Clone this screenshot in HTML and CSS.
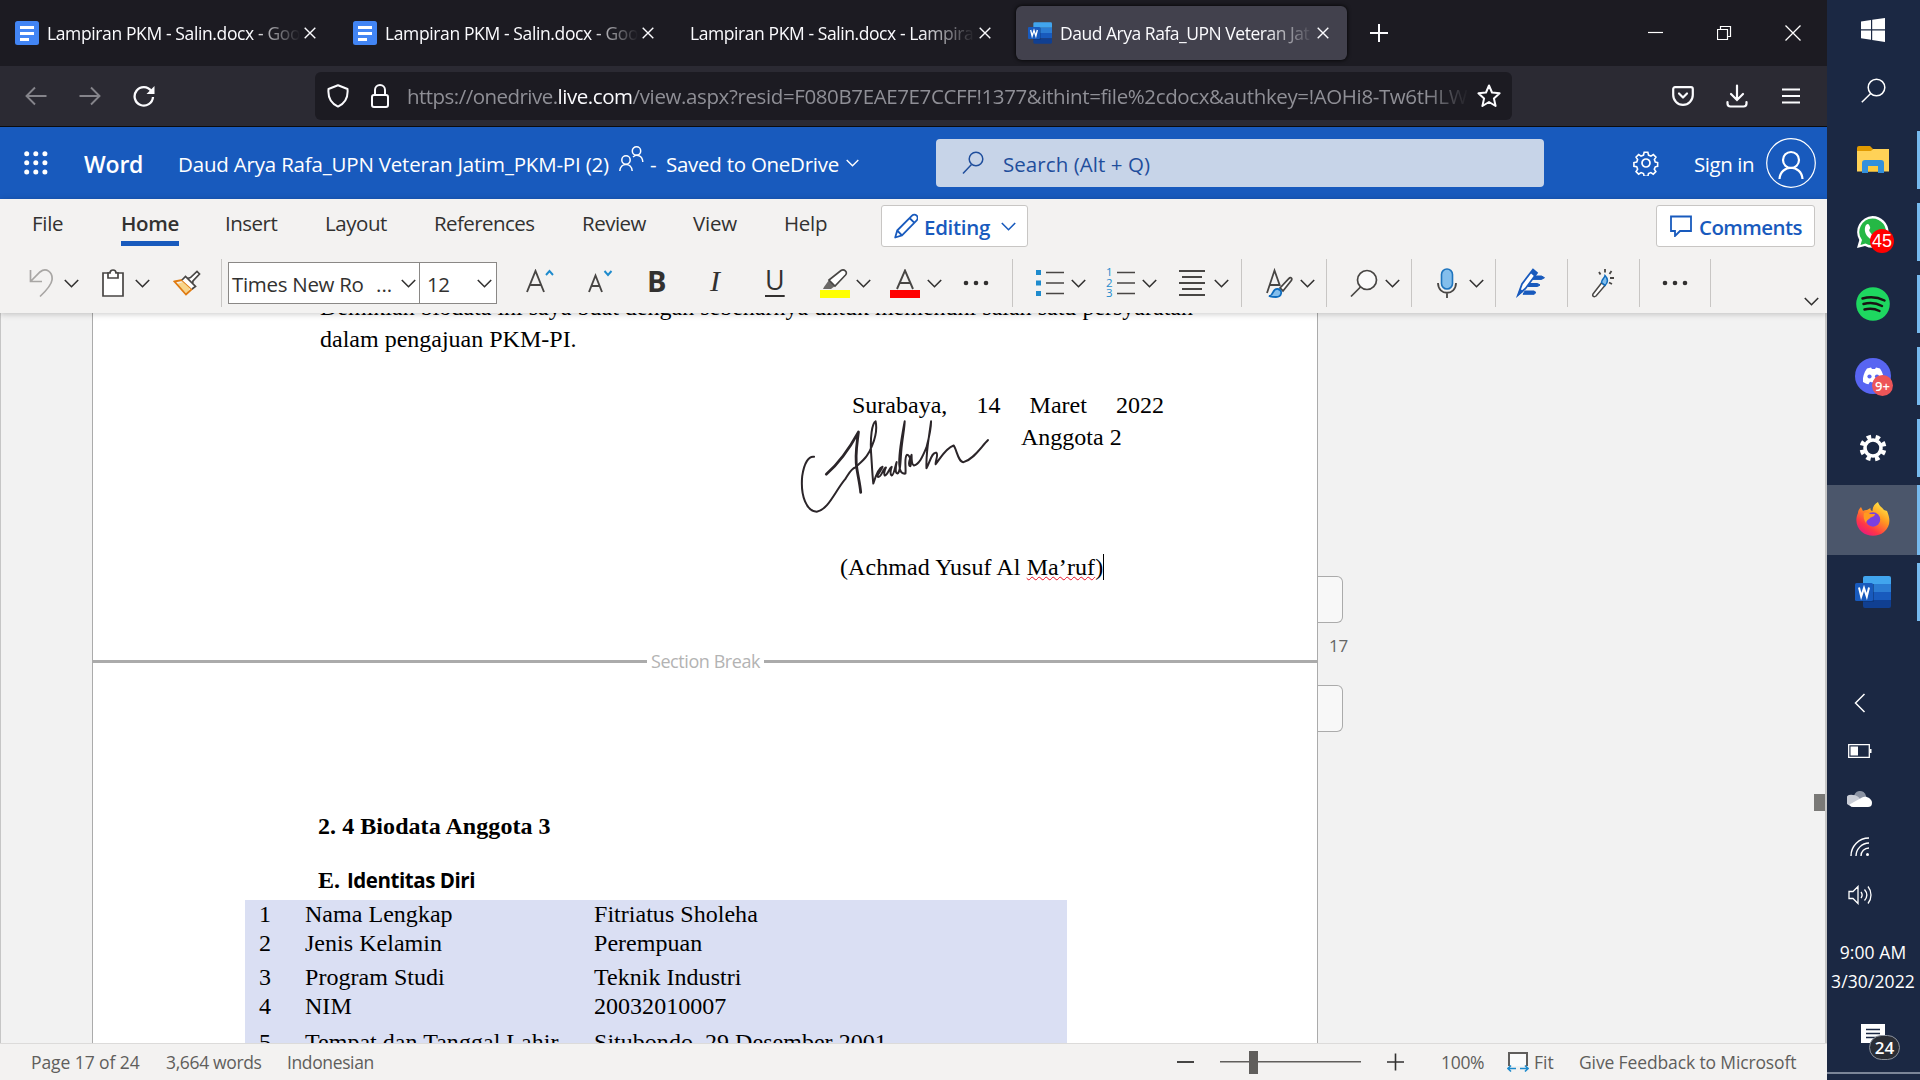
FILE: index.html
```html
<!DOCTYPE html>
<html lang="en">
<head>
<meta charset="utf-8">
<title>Daud Arya Rafa_UPN Veteran Jatim_PKM-PI (2)</title>
<link rel="stylesheet" href="styles.css">
</head>
<body>
<svg width="0" height="0" class="defs">
  <defs>
    <symbol id="chev" viewBox="0 0 15 9"><path d="M.8 1l6.700 6.700L14.200 1" fill="none" stroke="currentColor" stroke-width="1.600"/></symbol>
    <symbol id="x" viewBox="0 0 12 12"><path d="M.7.700l10.600 10.600M11.300.7.700 11.300" stroke="currentColor" stroke-width="1.400"/></symbol>
    <symbol id="gdoc" viewBox="0 0 24 24"><rect width="24" height="24" rx="2.500" fill="#4285f4"/><path d="M5 5h14v3H5zM5 11h14v3H5zM5 17h9v3H5z" fill="#fff"/></symbol>
    <symbol id="word" viewBox="0 0 36 32"><path d="M10 0h24a2 2 0 0 1 2 2v6H8V2a2 2 0 0 1 2-2z" fill="#41a5ee"/><path d="M8 8h28v8H8z" fill="#2b7cd3"/><path d="M8 16h28v8H8z" fill="#185abd"/><path d="M8 24h28v6a2 2 0 0 1-2 2H10a2 2 0 0 1-2-2z" fill="#103f91"/><path d="M8 8h11v18H8z" fill="#0b2f6b" opacity=".5"/><rect y="7" width="18" height="18" rx="1.500" fill="#185abd"/><path d="M4 11.500l2.200 9L9 12l2.800 8.500 2.200-9" fill="none" stroke="#fff" stroke-width="2"/></symbol>
  </defs>
</svg>
<div class="screen">
<main class="browser">
  <div class="tabs">
    <div class="tab tab-1"><svg class="fav" width="24" height="24"><use href="#gdoc"/></svg><span class="title">Lampiran PKM - Salin.docx - Goo</span><svg class="close" width="12" height="12"><use href="#x"/></svg></div>
    <div class="tab tab-2"><svg class="fav" width="24" height="24"><use href="#gdoc"/></svg><span class="title">Lampiran PKM - Salin.docx - Goo</span><svg class="close" width="12" height="12"><use href="#x"/></svg></div>
    <div class="tab tab-3"><span class="title">Lampiran PKM - Salin.docx - Lampira</span><svg class="close" width="12" height="12"><use href="#x"/></svg></div>
    <div class="tab tab-4"><svg class="fav" width="24" height="22" preserveAspectRatio="none"><use href="#word"/></svg><span class="title">Daud Arya Rafa_UPN Veteran Jat</span><svg class="close" width="12" height="12"><use href="#x"/></svg></div>
    <svg class="new-tab" width="18" height="18" viewBox="0 0 18 18"><path d="M9 0v18M0 9h18" stroke="#fbfbfe" stroke-width="2"/></svg>
    <div class="win-buttons">
      <svg width="16" height="16"><path d="M0 7.500h15" stroke="#fff" stroke-width="1.200"/></svg>
      <svg width="16" height="16" fill="none" stroke="#fff" stroke-width="1.200"><path d="M.5 4.500h10v10H.5zM3.500 4.500v-3h10v10h-3"/></svg>
      <svg width="16" height="16"><path d="M.5.500l15 15M15.500.500l-15 15" stroke="#fff" stroke-width="1.300"/></svg>
    </div>
  </div>

  <div class="nav">
    <svg class="back" width="22" height="20" fill="none" stroke="#85848b" stroke-width="1.900"><path d="M21.500 10H1.500M10 1.500L1.500 10l8.500 8.500"/></svg>
    <svg class="forward" width="22" height="20" fill="none" stroke="#85848b" stroke-width="1.900"><path d="M.5 10h20M12 1.500l8.500 8.500-8.500 8.500"/></svg>
    <svg class="reload" width="22" height="22" fill="none" stroke="#fbfbfe" stroke-width="2.300"><path d="M18.300 6A9.200 9.200 0 1 0 20 12"/><path d="M21.500 1v8h-8z" fill="#fbfbfe" stroke="none"/></svg>
    <div class="url">
      <svg class="shield" width="22" height="24" fill="none" stroke="#fbfbfe" stroke-width="2"><path d="M11 1.200L20.500 5c.8 8.500-3 14.500-9.500 17.600C4.500 19.500.7 13.500 1.500 5z" stroke-linejoin="round"/></svg>
      <svg class="lock" width="18" height="24" fill="none" stroke="#fbfbfe" stroke-width="2"><rect x="1" y="11" width="16" height="12" rx="2"/><path d="M4 11V6a5 5 0 0 1 10 0v5"/></svg>
      <span class="address"><span class="proto">https://onedrive.</span><span class="domain">live.com</span><span class="path">/view.aspx?resid=F080B7EAE7E7CCFF!1377&amp;ithint=file%2cdocx&amp;authkey=!AOHi8-Tw6tHLW</span></span>
      <svg class="star" width="24" height="24" fill="none" stroke="#fbfbfe" stroke-width="2" stroke-linejoin="round"><path d="M12 1.500l3 7 7.600.8-5.700 5.100 1.700 7.600L12 18l-6.600 4 1.700-7.600L1.400 9.300 9 8.500z"/></svg>
    </div>
    <svg class="pocket" width="22" height="20" fill="none" stroke="#fbfbfe" stroke-width="2.200" stroke-linejoin="round" stroke-linecap="round"><path d="M3 1.200h16a1.800 1.800 0 0 1 1.800 1.800v6a9.800 9.800 0 0 1-19.600 0V3A1.800 1.800 0 0 1 3 1.200zM7 7.500l4 4 4-4"/></svg>
    <svg class="download" width="22" height="24" fill="none" stroke="#fbfbfe" stroke-width="2.200" stroke-linecap="round"><path d="M11 1.500v14M5 10l6 6 6-6M1.500 18v1.500a3 3 0 0 0 3 3h13a3 3 0 0 0 3-3V18"/></svg>
    <svg class="menu" width="18" height="16"><path d="M0 1.500h18M0 8h18M0 14.500h18" stroke="#fbfbfe" stroke-width="2"/></svg>
  </div>

  <header class="app-bar">
    <svg class="waffle" width="24" height="24" fill="#fff"><circle cx="2.700" cy="2.700" r="2.500"/><circle cx="11.800" cy="2.700" r="2.500"/><circle cx="20.900" cy="2.700" r="2.500"/><circle cx="2.700" cy="11.800" r="2.500"/><circle cx="11.800" cy="11.800" r="2.500"/><circle cx="20.900" cy="11.800" r="2.500"/><circle cx="2.700" cy="20.900" r="2.500"/><circle cx="11.800" cy="20.900" r="2.500"/><circle cx="20.900" cy="20.900" r="2.500"/></svg>
    <span class="brand">Word</span>
    <span class="doc-name">Daud Arya Rafa_UPN Veteran Jatim_PKM-PI (2)</span>
    <svg class="people" width="26" height="26" fill="none" stroke="#fff" stroke-width="1.500"><circle cx="7" cy="14" r="4.200"/><path d="M.8 25c.5-8.800 11.900-8.800 12.400 0"/><circle cx="17.500" cy="5" r="4.200"/><path d="M14 11c4-3.500 9.500-1 9.800 5"/></svg>
    <span class="dash">-</span>
    <span class="saved">Saved to OneDrive</span>
    <svg class="saved-chev" width="13" height="8"><use href="#chev"/></svg>
    <div class="search">
      <svg width="22" height="24" fill="none" stroke="#1f4e9c" stroke-width="1.500"><circle cx="14" cy="8" r="6.800"/><path d="M9.500 13.500L1 22.500"/></svg>
      <span>Search (Alt + Q)</span>
    </div>
    <svg class="gear" width="26" height="26" viewBox="-13 -13 26 26" fill="none" stroke="#fff" stroke-width="1.700"><path d="M-2-11.500h4l.7 3 2.600 1.100 2.600-1.700 2.800 2.800-1.700 2.600 1 2.600 2.500.6v4l-2.500.6-1.100 2.500 1.700 2.600-2.800 2.800-2.600-1.700-2.500 1-.7 3h-4l-.7-3-2.600-1-2.600 1.700-2.800-2.800 1.700-2.600-1-2.500-3-.6v-4l3-.6 1-2.600-1.700-2.600 2.800-2.800 2.600 1.700 2.600-1.100z" transform="scale(.93)"/><circle r="4"/></svg>
    <span class="sign-in">Sign in</span>
    <svg class="avatar" width="50" height="50" fill="none" stroke="#fff"><circle cx="25" cy="25" r="24.300" stroke-width="1.200"/><g stroke-width="2.200"><circle cx="25" cy="22" r="8"/><path d="M13.500 41c1-15 22-15 23 0"/></g></svg>
  </header>

  <div class="ribbon">
    <nav class="ribbon-tabs">
      <span class="r-file">File</span>
      <span class="r-home">Home</span>
      <span class="r-insert">Insert</span>
      <span class="r-layout">Layout</span>
      <span class="r-references">References</span>
      <span class="r-review">Review</span>
      <span class="r-view">View</span>
      <span class="r-help">Help</span>
      <div class="pill editing"><svg width="24" height="26" fill="none" stroke="#185abd" stroke-width="1.800" stroke-linejoin="round"><path d="M1.200 24.500l2-7L18 2.600a3.300 3.300 0 0 1 4.700 4.700L8 22.300zM15.500 5l4.700 4.700M3.200 17.500L8 22.300"/></svg><span>Editing</span><svg class="chev" width="15" height="9"><use href="#chev"/></svg></div>
      <div class="pill comments"><svg width="22" height="22" fill="none" stroke="#185abd" stroke-width="1.800"><path d="M1 1.500h20V16H10l-5 5v-5H1z"/></svg><span>Comments</span></div>
    </nav>
    <div class="tools">
      <svg class="undo" width="26" height="29" fill="none" stroke="#a8a6a4" stroke-width="1.700"><path d="M1.500 1v11.500H13M1.500 12.500L11 3C17-2 24 3 23 11c-.5 4-4 9-12 16.500"/></svg>
      <svg class="chev c-undo" width="15" height="9"><use href="#chev"/></svg>
      <svg class="clip" width="24" height="29" fill="none" stroke="#484644" stroke-width="1.700"><path d="M2 4h20v23H2z" fill="#fff"/><path d="M7 4h2c0-4 6-4 6 0h2v5H7z" fill="#fff"/></svg>
      <svg class="chev c-clip" width="15" height="9"><use href="#chev"/></svg>
      <svg class="painter" width="28" height="26"><path d="M4 14l10 10 3-6-7-6z" fill="#f8d58a"/><path d="M1.500 11.500L9 10l10 9-6 5.500z" fill="none" stroke="#e07b10" stroke-width="1.800"/><path d="M9 10l3.500-3.500 10 10L19 19M14.500 8.500l3-1L24 1.500l2.500 2.500-6.500 7-.5 3" fill="#fff" stroke="#484644" stroke-width="1.700"/></svg>
      <i class="sep s1"></i>
      <div class="font-box"><span class="font-name">Times New Ro</span><span class="dots3">...</span><svg class="chev" width="15" height="9"><use href="#chev"/></svg></div>
      <div class="size-box"><span>12</span><svg class="chev" width="15" height="9"><use href="#chev"/></svg></div>
      <svg class="grow" width="28" height="24" fill="none" stroke="#484644" stroke-width="1.900"><path d="M1 23L9.500 2 18 23M4 16h11"/><path d="M20 6l3.500-4L27 6" stroke="#1e8bcd"/></svg>
      <svg class="shrink" width="26" height="24" fill="none" stroke="#484644" stroke-width="1.900"><path d="M1 23L7.500 6.500 14 23M3.500 17h8"/><path d="M16.500 2l3.500 4 3.500-4" stroke="#1e8bcd"/></svg>
      <span class="bold">B</span><span class="italic">I</span><span class="under">U</span>
      <svg class="marker" width="30" height="30"><path d="M0 21h30v8H0z" fill="#ff0"/><path d="M4 18l5-7 6 6-4 3H3z" fill="#6b6967"/><path d="M9 11L21 1.500c3-2 7 1.500 4.500 4.500L15 17z" fill="#fff" stroke="#484644" stroke-width="1.600"/></svg>
      <svg class="chev c-marker" width="15" height="9"><use href="#chev"/></svg>
      <svg class="color" width="30" height="30"><path d="M0 21h30v8H0z" fill="red"/><path d="M7 20L15 1.500 23 20M9.500 14h11" fill="none" stroke="#484644" stroke-width="1.900"/></svg>
      <svg class="chev c-color" width="15" height="9"><use href="#chev"/></svg>
      <svg class="more" width="26" height="6" fill="#323130"><circle cx="3" cy="3" r="2.300"/><circle cx="13" cy="3" r="2.300"/><circle cx="23" cy="3" r="2.300"/></svg>
      <i class="sep s2"></i>
      <svg class="bullets" width="28" height="28"><path d="M0 1h5v5H0zM0 11.500h5v5H0zM0 22h5v5H0z" fill="#1e8bcd"/><path d="M10 3.500h18M10 14h18M10 24.500h18" stroke="#484644" stroke-width="1.700"/></svg>
      <svg class="chev c-bullets" width="15" height="9"><use href="#chev"/></svg>
      <div class="numbers"><span class="digits"><b>1</b><b>2</b><b>3</b></span><svg width="18" height="28"><path d="M0 3.500h18M0 14h18M0 24.500h18" stroke="#484644" stroke-width="1.700"/></svg></div>
      <svg class="chev c-numbers" width="15" height="9"><use href="#chev"/></svg>
      <svg class="align" width="28" height="28"><path d="M1 2h26M4 8h20M1 14h26M4 20h20M1 26h26" stroke="#484644" stroke-width="1.800"/></svg>
      <svg class="chev c-align" width="15" height="9"><use href="#chev"/></svg>
      <i class="sep s3"></i>
      <svg class="styles" width="27" height="30" fill="none" stroke="#484644" stroke-width="1.800"><path d="M1 25L8.500 2.500 14 18M4 17h9"/><path d="M14 20L23 10.500c2-2 3.500 0 2.300 2L17 23z" fill="#fff"/><path d="M3 28c5 0 3-8 9-7 5 1 4 8-2 8-3 0-5 0-7-1z" fill="#83beec" stroke="#0f6cbd"/></svg>
      <svg class="chev c-styles" width="15" height="9"><use href="#chev"/></svg>
      <i class="sep s4"></i>
      <svg class="find" width="28" height="29" fill="none" stroke="#484644" stroke-width="1.700"><circle cx="17" cy="11" r="9.500" fill="#fafafa"/><path d="M10.500 18L1 27.500"/></svg>
      <svg class="chev c-find" width="15" height="9"><use href="#chev"/></svg>
      <i class="sep s5"></i>
      <svg class="mic" width="20" height="30" fill="none" stroke="#484644" stroke-width="1.800"><rect x="4.500" y="1" width="11" height="20" rx="5.500" fill="#83beec" stroke="#1e74bd" stroke-width="1.600"/><path d="M1 15c0 13 18 13 18 0M10 24.500V30"/></svg>
      <svg class="chev c-mic" width="15" height="9"><use href="#chev"/></svg>
      <i class="sep s6"></i>
      <svg class="editor" width="30" height="30"><path d="M19 8h6.500l3 1.700-3 1.700H17zM14 15.500h7.500l2.500 1.500-2.500 1.500H12zM9 23h9l2 1.500-2 1.800H7z" fill="#185abd" stroke="#185abd"/><path d="M2 27l4-11L17 1.500l4 3.500L9.500 20.500z" fill="#fff" stroke="#185abd" stroke-width="1.800"/><path d="M1 28.500l3-8 3.500 3zM14.500 5L17 1.500l4 3.500-2.500 3.500z" fill="#185abd"/></svg>
      <i class="sep s7"></i>
      <svg class="wand" width="26" height="29" fill="none" stroke="#484644" stroke-width="1.500"><path d="M2 25l8.500-11 3.500 2.500-9 10.500c-2 1.500-4 0-3-2z" fill="#fff"/><path d="M10.500 13.500c0-3 3-4 3.500-7 3 3 3.500 7 0 10z" fill="#83beec" stroke="#0f6cbd"/><path d="M14 0v3.500M8 3l1.500 2.500M20.500 2l-2 3M19 9h4M18 13.500l3 1.500" stroke-width="1.800"/></svg>
      <i class="sep s8"></i>
      <svg class="more2" width="26" height="6" fill="#323130"><circle cx="3" cy="3" r="2.300"/><circle cx="13" cy="3" r="2.300"/><circle cx="23" cy="3" r="2.300"/></svg>
      <i class="sep s9"></i>
      <svg class="chev collapse" width="15" height="9"><use href="#chev"/></svg>
    </div>
  </div>

  <section class="canvas">
    <article class="page">
      <p class="para">Demikian biodata ini saya buat dengan sebenarnya untuk memenuhi salah satu persyaratan</p>
      <p class="para last">dalam pengajuan PKM-PI.</p>
      <p class="place">Surabaya, 14 Maret 2022</p>
      <p class="role">Anggota 2</p>
      <p class="signer">(Achmad Yusuf Al <span class="typo">Ma’ruf</span>)<i class="caret"></i></p>
      <div class="break"><span>Section Break</span></div>
      <h2>2. 4 Biodata Anggota 3</h2>
      <h3>E. <span class="ident">Identitas Diri</span></h3>
      <div class="table">
        <div class="row r29"><span>1</span><span>Nama Lengkap</span><span>Fitriatus Sholeha</span></div>
        <div class="row r34"><span>2</span><span>Jenis Kelamin</span><span>Perempuan</span></div>
        <div class="row r29"><span>3</span><span>Program Studi</span><span>Teknik Industri</span></div>
        <div class="row r36"><span>4</span><span>NIM</span><span>20032010007</span></div>
        <div class="row r29"><span>5</span><span>Tempat dan Tanggal Lahir</span><span>Situbondo, 29 Desember 2001</span></div>
      </div>
      <svg class="signature" width="195" height="97" viewBox="100 140 510 290" preserveAspectRatio="none" fill="none" stroke="#2b2529" stroke-width="2" stroke-linejoin="round" stroke-linecap="round">
        <path vector-effect="non-scaling-stroke" d="M142 259c-14-3-26 18-31 58-5 60 12 105 38 106 30-5 48-62 75-98 10-18 16-32 26-34 22-24 34-34 44-66 10-28 12-56 9-72-10 6-14 50-12 92 2 30 3 64 6 94 6-22 16-48 24-50-4 12-16 26-12 30 9 4 14-28 21-28-4 8-6 20-3 24 7 0 12-24 18-26-3 10-4 22 0 26 6 0 9-28 13-40-3 16-4 34 2 34 8-2 8-40 10-66 3-40 9-70 9-90-5 30-16 100-14 130 1 20 6 28 16 26 2-16-4-50 4-56 10 0 12 36 8 34-6-4-2-18 4-34 0 14 0 30 6 32 14-4 22-24 33-54 8-34 12-60 12-78-4 40-14 90-12 140 10-20 14-50 26-46 6 6-4 30-2 34 14-20 26-48 47-56 8 12 12 50 26 50 28-10 46-46 64-66"/>
        <path vector-effect="non-scaling-stroke" stroke-width="2.800" d="M174 311c32-32 62-80 84-126-4 40-10 70-4 110 4 28 8 46 10 70"/>
      </svg>
    </article>
    <aside class="margin">
      <i class="flap"></i>
      <span class="page-no">17</span>
      <i class="flap"></i>
    </aside>
    <i class="scroll-thumb"></i>
  </section>

  <footer class="status">
    <span class="st-page">Page 17 of 24</span>
    <span class="st-words">3,664 words</span>
    <span class="st-lang">Indonesian</span>
    <svg class="minus" width="18" height="18"><path d="M0 9h17" stroke="#323130" stroke-width="1.800"/></svg>
    <div class="slider"><i></i></div>
    <svg class="plus" width="18" height="18"><path d="M0 9h17M8.500.500v17" stroke="#323130" stroke-width="1.600"/></svg>
    <span class="st-zoom">100%</span>
    <svg class="fit" width="22" height="22" fill="none"><path d="M2 15V2h18v13" stroke="#605e5c" stroke-width="2" fill="#fafafa"/><path d="M1 17.500h8M13 17.500h8M4 14.500l-3 3 3 3M18 14.500l3 3-3 3" stroke="#1e8bcd" stroke-width="1.600"/></svg>
    <span class="st-fit">Fit</span>
    <span class="st-feedback">Give Feedback to Microsoft</span>
  </footer>
</main>

<aside class="taskbar">
  <div class="slot"><svg width="24" height="24" fill="#fff"><path d="M0 3.500L10 2v9.300H0zM11.200 1.800L24 0v11.300H11.200zM0 12.500h10v9.300l-10-1.500zM11.200 12.500H24V24l-12.800-1.900z"/></svg></div>
  <div class="slot"><svg width="25" height="25" fill="none" stroke="#fff" stroke-width="1.500"><circle cx="15.500" cy="9.500" r="8.300"/><path d="M9.700 15.500L.8 24.300"/></svg></div>
  <div class="app first"><svg width="32" height="28"><path d="M0 2a2 2 0 0 1 2-2h11l3 3-2 4H0z" fill="#e19a00"/><path d="M0 5h14l2-2h16v22.500H0z" fill="#ffd257"/><path d="M5 27V17a3 3 0 0 1 3-3h16a3 3 0 0 1 3 3v10h-6v-7h-10v7z" fill="#3390dc"/><path d="M11 20h10v5.500H11z" fill="#ffcb3d"/></svg></div>
  <div class="app"><svg width="38" height="38" class="big"><path d="M18.500 3A16 16 0 0 1 34.500 19 16 16 0 0 1 11 33L3 35l2.300-8A16 16 0 0 1 18.500 3z" fill="#fff"/><path d="M18.500 5.500a13.500 13.500 0 1 1-7 25L6.500 32 8 27a13.500 13.500 0 0 1 10.500-21.500z" fill="#25b845"/><path d="M12 12c2-2 3-1 4 2 1 2-2 2 0 5s5 5 6 4 2-2 4 0c1 1 0 4-3 5-8 0-15-9-11-16z" fill="#fff"/></svg><b class="badge wa">45</b></div>
  <div class="app"><svg width="34" height="34"><circle cx="17" cy="17" r="16.800" fill="#1ed760"/><path d="M6.500 11.500c7-2 15-1.500 22 2M7.500 17c6-1.700 13-1 18.500 2M8.500 22.500c5-1.300 10-1 15 1.500" fill="none" stroke="#191414" stroke-width="2.500" stroke-linecap="round"/></svg></div>
  <div class="app"><svg width="36" height="36"><circle cx="18" cy="18" r="18" fill="#5865f2"/><path d="M12 10.500l4-1 1 1.500h3l1-1.500 4 1c3 4 4 9 3.500 13.500-2 1.500-3.500 2-5 2.300l-1.500-2.500c-3 .7-5 .7-7 0l-1.500 2.500c-2-.5-3.500-1-5.500-2.300-.5-5 1-9.500 4-13.500z" fill="#fff"/><circle cx="14.500" cy="18.500" r="2.100" fill="#5865f2"/><circle cx="22" cy="18.500" r="2.100" fill="#5865f2"/></svg><b class="badge dc">9+</b></div>
  <div class="app"><svg width="28" height="28" viewBox="-14 -14 28 28" fill="none" stroke="#fff"><circle r="8" stroke-width="3.600"/><circle r="11.300" stroke-width="4.200" stroke-dasharray="4.440 4.440" transform="rotate(11.500)"/></svg></div>
  <div class="app active"><svg width="36" height="36"><defs><linearGradient id="fx" x1=".85" y1="0" x2=".2" y2="1"><stop offset="0" stop-color="#fff44f"/><stop offset=".4" stop-color="#ff9a20"/><stop offset=".75" stop-color="#ff3647"/><stop offset="1" stop-color="#e31587"/></linearGradient></defs><path d="M23 1c1 4 4 5 6 8l3 1c4 9 3 16-3 21-6 5-16 5-22 0C1 26 0 18 3 12c0-2 1-4 3-6l2 4c1-1 3-1 4-1l3.500-2c-.5 2 1 3 2 3 0-4 2-7 5.500-9z" fill="url(#fx)"/><circle cx="18" cy="18.500" r="7.200" fill="#7a3fe0"/><path d="M9 12c3-1 5 0 6 1h5c0 2-3 3-5 4 0 1-3 1-4 5-2-3-3-6-2-10z" fill="#ff9a20"/></svg></div>
  <div class="app"><svg width="36" height="32"><use href="#word"/></svg></div>
  <div class="tray">
    <svg width="12" height="20" fill="none" stroke="#fff" stroke-width="1.500"><path d="M10.500 1L1.500 10l9 9"/></svg>
    <svg width="24" height="14"><path d="M.7.700h20.600v12.600H.7z" fill="none" stroke="#fff" stroke-width="1.300"/><path d="M2.500 2.500H10v9H2.500zM22 5h1.500v4H22z" fill="#fff"/></svg>
    <svg width="26" height="18"><path d="M7 8a6 6 0 0 1 12-2l1 6z" fill="#8b93a3"/><path d="M1.500 15A5.500 5.500 0 0 1 6 5c3 0 6 2 7 4l-8 8z" fill="#c9cdd6"/><path d="M2.500 14.500L15 7.500c4-2 10 1 10 5.500 0 3-2 4-4 4H6c-1.500 0-3-1-3.500-2.500z" fill="#fff"/></svg>
    <svg width="20" height="20" fill="none" stroke="#fff" stroke-width="1.400"><path d="M1 19C1 9 9 1 19 1M6 19C6 12 12 6 19 6M11 19c0-4.500 3.500-8 8-8"/><circle cx="17.500" cy="17.500" r="1.500" fill="#fff" stroke="none"/></svg>
    <svg width="24" height="20" fill="none" stroke="#fff" stroke-width="1.300"><path d="M1 6.500h4l5-5v17l-5-5H1zM13 7c1.500 2 1.500 4 0 6M16.500 4.500c3 3.500 3 7.500 0 11M20 1.500c4 5 4 12 0 17"/></svg>
  </div>
  <div class="clock"><span>9:00 AM</span><span>3/30/2022</span></div>
  <div class="notify"><svg width="24" height="26"><path d="M0 0h24v19H14l-5 6v-6H0z" fill="#fff"/><path d="M5 5.500h14M5 9.500h14M5 13.500h14" stroke="#1b2843" stroke-width="1.300"/></svg><b class="badge nt">24</b></div>
  <i class="desk-line"></i>
</aside>
</div>
</body>
</html>
```
FILE: styles.css
```css
* { box-sizing: border-box; }
body { margin: 0; background: #f2f2f2; font-family: "Open Sans", "Noto Sans", sans-serif; overflow: hidden; }
svg { display: block; flex: none; }
p, h2, h3 { margin: 0; }
.defs { position: absolute; }
.screen { display: flex; width: 1920px; height: 1080px; white-space: nowrap; }
.browser { width: 1827px; height: 1080px; display: flex; flex-direction: column; overflow: hidden; }

/* browser tabs */
.tabs { height: 66px; background: #1c1b22; color: #fbfbfe; display: flex; align-items: center; }
.tab { height: 54px; display: flex; align-items: center; font-size: 17.500px; letter-spacing: -.38px; border-radius: 6px; }
.tab .title { flex: none; line-height: 54px; margin-left: 9px; overflow: hidden; -webkit-mask-image: linear-gradient(90deg, #000 80%, transparent 99%); mask-image: linear-gradient(90deg, #000 80%, transparent 99%); }
.tab .close { margin-left: 1px; }
.tab-1 { margin-left: 15px; width: 338px; }
.tab-1 .title { margin-left: 8px; width: 256px; }
.tab-2 { width: 337px; }
.tab-2 .title { margin-left: 8px; width: 256px; }
.tab-3 { width: 326px; }
.tab-3 .title { margin-left: 0; width: 288px; letter-spacing: -.42px; }
.tab-4 { width: 331px; padding-left: 12px; background: #42414d; box-shadow: 0 0 4px #000; }
.tab-4 .title { margin-left: 8px; width: 256px; letter-spacing: -.48px; }
.new-tab { margin-left: 23px; }
.win-buttons { display: flex; gap: 52.500px; margin-left: 260px; }

/* address row */
.nav { height: 61px; background: #2b2a33; border-bottom: 1px solid #0c0c0d; display: flex; align-items: center; }
.back { margin-left: 25px; }
.forward { margin-left: 32px; }
.reload { margin-left: 32px; }
.url { margin-left: 160px; width: 1197px; height: 48px; border-radius: 6px; background: #1c1b22; display: flex; align-items: center; padding-left: 12px; }
.lock { margin-left: 22px; }
.address { margin-left: 18px; width: 1062px; flex: none; overflow: hidden; font-size: 20.500px; line-height: 48px; color: #8f8f96; -webkit-mask-image: linear-gradient(90deg, #000 96%, transparent); mask-image: linear-gradient(90deg, #000 96%, transparent); }
.proto { letter-spacing: -.53px; }
.domain { color: #fbfbfe; letter-spacing: -.45px; }
.path { letter-spacing: -.38px; }
.star { margin-left: 8px; }
.pocket { margin-left: 160px; }
.download { margin-left: 32px; }
.menu { margin-left: 34px; }

/* Word header */
.app-bar { height: 72px; background: #185abd; color: #fff; display: flex; align-items: center; font-size: 20.500px; line-height: 72px; }
.app-bar > span { padding-top: 1px; }
.waffle { margin-left: 24px; }
.brand { margin-left: 36px; width: 94px; font-size: 23px; font-weight: 600; letter-spacing: -.2px; }
.doc-name { width: 441px; letter-spacing: -.19px; }
.people { margin-top: -8px; }
.dash { margin-left: 5px; width: 16px; }
.saved { width: 180px; letter-spacing: -.26px; }
.search { margin-left: 77px; width: 608px; height: 48px; border-radius: 4px; background: #c7d4e8; color: #1f4e9c; display: flex; align-items: center; line-height: 48px; padding-left: 26px; }
.search span { margin-left: 19px; padding-top: 1px; letter-spacing: .06px; }
.gear { margin-left: 89px; }
.sign-in { margin-left: 35px; width: 72px; letter-spacing: -.42px; }

/* ribbon */
.ribbon { height: 114px; flex: none; background: #f3f2f1; color: #323130; box-shadow: 0 1px 6px rgba(0,0,0,.22); position: relative; z-index: 2; }
.ribbon-tabs { height: 54px; display: flex; font-size: 20.500px; line-height: 49px; }
.ribbon-tabs > span { flex: none; }
.r-file { margin-left: 32px; width: 89px; letter-spacing: -.3px; }
.r-home { width: 58px; height: 47px; font-weight: 600; border-bottom: 5px solid #185abd; margin-right: 46px; letter-spacing: -.32px; }
.r-insert { width: 100px; letter-spacing: -.5px; }
.r-layout { width: 109px; letter-spacing: -.43px; }
.r-references { width: 148px; letter-spacing: -.58px; }
.r-review { width: 111px; letter-spacing: -.5px; }
.r-view { width: 91px; letter-spacing: -.2px; }
.r-help { width: 97px; letter-spacing: -.3px; }
.pill { margin-top: 6px; height: 42px; border: 1px solid #c8c6c4; border-radius: 3px; background: #fff; color: #185abd; font-weight: 600; line-height: 44px; display: flex; align-items: center; padding-left: 12px; flex: none; }
.pill span { padding-top: 2px; }
.editing { width: 147px; }
.editing span { width: 77px; margin-left: 6px; letter-spacing: -.31px; }
.pill .chev { color: #185abd; }
.comments { margin-left: 628px; width: 159px; padding-left: 13px; }
.comments span { margin-left: 7px; letter-spacing: -.57px; }
.tools { height: 60px; display: flex; align-items: center; }
.chev { color: #323130; }
.sep { width: 1px; height: 48px; background: #c8c6c4; flex: none; }
.undo { margin-left: 29px; }
.c-undo { margin-left: 9px; }
.clip { margin-left: 22px; }
.c-clip { margin-left: 10px; }
.painter { margin-left: 23px; }
.s1 { margin-left: 20px; }
.font-box, .size-box { height: 42px; border: 1px solid #8a8886; background: #fff; display: flex; align-items: center; font-size: 20.500px; line-height: 42px; flex: none; }
.font-box span, .size-box span { padding-top: 2px; }
.font-box { margin-left: 6px; width: 192px; padding-left: 3px; }
.font-name { width: 144px; letter-spacing: -.3px; }
.dots3 { width: 25px; }
.size-box { width: 77px; border-left: 0; padding-left: 7px; }
.size-box span { width: 50px; letter-spacing: -.5px; }
.grow { margin-left: 29px; margin-top: -4px; }
.shrink { margin-left: 34px; margin-top: -4px; }
.bold { margin-left: 33px; width: 63px; font-size: 29px; font-weight: 700; line-height: 56px; margin-top: -4px; }
.italic { width: 55px; font: italic 30px/56px "Liberation Serif", serif; margin-top: -4px; }
.under { width: 22px; font-size: 27px; line-height: 26px; height: 33px; text-decoration: underline; text-decoration-thickness: 2px; text-underline-offset: 5px; margin-right: 33px; }
.marker { margin-top: 1px; }
.c-marker { margin-left: 6px; }
.color { margin-left: 19px; margin-top: 1px; }
.c-color { margin-left: 7px; }
.more { margin-left: 21px; }
.s2 { margin-left: 23px; }
.bullets { margin-left: 23px; }
.c-bullets { margin-left: 7px; }
.numbers { margin-left: 20px; width: 29px; display: flex; align-items: center; gap: 4px; color: #1e8bcd; }
.digits { display: grid; grid-template-rows: repeat(3, 10.500px); width: 7px; font-size: 11.500px; line-height: 10.500px; }
.digits b { font-weight: 400; }
.c-numbers { margin-left: 7px; }
.align { margin-left: 21px; }
.c-align { margin-left: 8px; }
.s3 { margin-left: 12px; }
.styles { margin-left: 24px; }
.c-styles { margin-left: 7px; }
.s4 { margin-left: 11px; }
.find { margin-left: 23px; }
.c-find { margin-left: 7px; }
.s5 { margin-left: 11px; }
.mic { margin-left: 25px; }
.c-mic { margin-left: 12px; }
.s6 { margin-left: 11px; }
.editor { margin-left: 20px; }
.s7 { margin-left: 21px; }
.wand { margin-left: 23px; }
.s8 { margin-left: 22px; }
.more2 { margin-left: 22px; }
.s9 { margin-left: 22px; }
.collapse { margin-left: 93px; margin-top: 37px; }

/* document */
.canvas { height: 730px; flex: none; background: #f2f2f2; border-left: 1px solid #c6c6c6; border-right: 2px solid #c6c6c6; display: flex; overflow: hidden; position: relative; padding-left: 91px; }
.page { width: 1226px; height: 760px; flex: none; background: #fff; border: solid #ababab; border-width: 0 1px; position: relative; font: 24px/32px "Liberation Serif", "Times New Roman", serif; color: #000; }
.para { margin: -22px 0 0 227px; width: 873px; text-align-last: justify; }
.para.last { margin-top: 0; text-align-last: left; }
.place { margin: 34px 0 0 759px; width: 312px; text-align-last: justify; white-space: normal; }
.role { margin-left: 928px; }
.signer { margin: 98px 0 0 747px; display: flex; align-items: center; white-space: pre; letter-spacing: .09px; }
.typo { text-decoration: underline wavy #e81123 1.300px; text-underline-offset: 1px; }
.caret { width: 1px; height: 26px; background: #000; }
.break { margin-top: 61px; height: 34px; display: flex; align-items: center; gap: 4px; font: 18px/34px "Open Sans", sans-serif; color: #b3b3b3; }
.break::before { content: ""; width: 554px; height: 3px; background: #ababab; }
.break::after { content: ""; flex: 1; height: 3px; background: #ababab; }
.break span { width: 109px; letter-spacing: -.43px; }
h2 { margin: 132px 0 0 225px; font-size: 24px; line-height: 32px; letter-spacing: .06px; }
h3 { margin: 22px 0 0 225px; font-size: 24px; line-height: 32px; height: 32px; }
.ident { font: 700 20.500px/28px "Open Sans", sans-serif; letter-spacing: -.45px; color: #000; margin-left: 1px; }
.table { margin: 4px 0 0 152px; width: 822px; background: #dadff3; height: 160px; line-height: 28px; letter-spacing: .03px; }
.row { display: grid; grid-template-columns: 46px 289px 1fr; padding-left: 14px; }
.r29 { height: 29px; } .r34 { height: 34px; } .r36 { height: 36px; }
.signature { position: absolute; left: 705px; top: 104px; }
.margin { padding-top: 263px; }
.flap { display: block; width: 25px; height: 47px; border: 1px solid #ababab; border-left: 0; border-radius: 0 6px 6px 0; background: #f8f8f8; }
.page-no { display: block; height: 62px; line-height: 45px; padding-left: 11px; font-size: 17px; letter-spacing: -.3px; color: #666; }
.scroll-thumb { position: absolute; right: -1px; top: 481px; width: 12px; height: 17px; background: #7a7977; }

/* status bar */
.status { height: 37px; background: #f3f2f1; border-top: 1px solid #dcdbda; color: #605e5c; display: flex; align-items: center; font-size: 17.500px; line-height: 36px; }
.status > * { flex: none; }
.st-page { margin-left: 31px; width: 135px; letter-spacing: -.08px; }
.st-words { width: 121px; letter-spacing: -.35px; }
.st-lang { width: 890px; letter-spacing: -.38px; }
.minus { margin-right: 25px; }
.slider { width: 141px; height: 23px; display: flex; align-items: center; background: linear-gradient(#605e5c, #605e5c) center / 100% 1.500px no-repeat; }
.slider i { width: 9px; height: 23px; background: #605e5c; margin-left: 29px; }
.plus { margin-left: 26px; }
.st-zoom { margin-left: 36px; width: 66px; letter-spacing: -.3px; }
.st-fit { margin-left: 5px; width: 45px; }
.st-feedback { letter-spacing: -.13px; }

/* taskbar */
.taskbar { width: 93px; height: 1080px; background: #1b2843; display: flex; flex-direction: column; color: #fff; position: relative; }
.slot { height: 60px; display: flex; align-items: center; justify-content: center; padding-right: 1px; flex: none; }
.app { height: 58px; margin-bottom: 14px; flex: none; display: flex; align-items: center; justify-content: center; position: relative; border-right: 3px solid #76b9ed; padding-left: 2px; }
.app.first { margin-top: 11px; }
.app.active { height: 70px; margin: -6px 0 8px; background: #4b566b; padding-bottom: 2px; }
.badge { position: absolute; display: flex; align-items: center; justify-content: center; }
.wa { left: 43px; top: 26px; width: 24px; height: 24px; border-radius: 50%; background: #f00; font: 18px/24px "Liberation Sans", sans-serif; }
.dc { left: 45px; top: 28px; width: 21px; height: 21px; border-radius: 50%; background: #ed5558; font: 600 13px/20px "Open Sans", sans-serif; }
.tray { margin-top: 44px; padding-right: 28px; display: grid; grid-template-rows: repeat(5, 48px); place-items: center; }
.clock { margin-top: 19px; padding-right: 1px; display: flex; flex-direction: column; align-items: center; font-size: 17.500px; line-height: 29px; letter-spacing: .1px; }
.notify { margin: 28px 0 0 34px; position: relative; }
.nt { left: 8px; top: 11px; width: 31px; height: 25px; border-radius: 13px; border: 1px solid #8c929c; background: #2a2d35; font: 600 17px/22px "Open Sans", sans-serif; }
.desk-line { position: absolute; left: 0; right: 0; top: 1072px; height: 2px; background: #7b8598; }
```
